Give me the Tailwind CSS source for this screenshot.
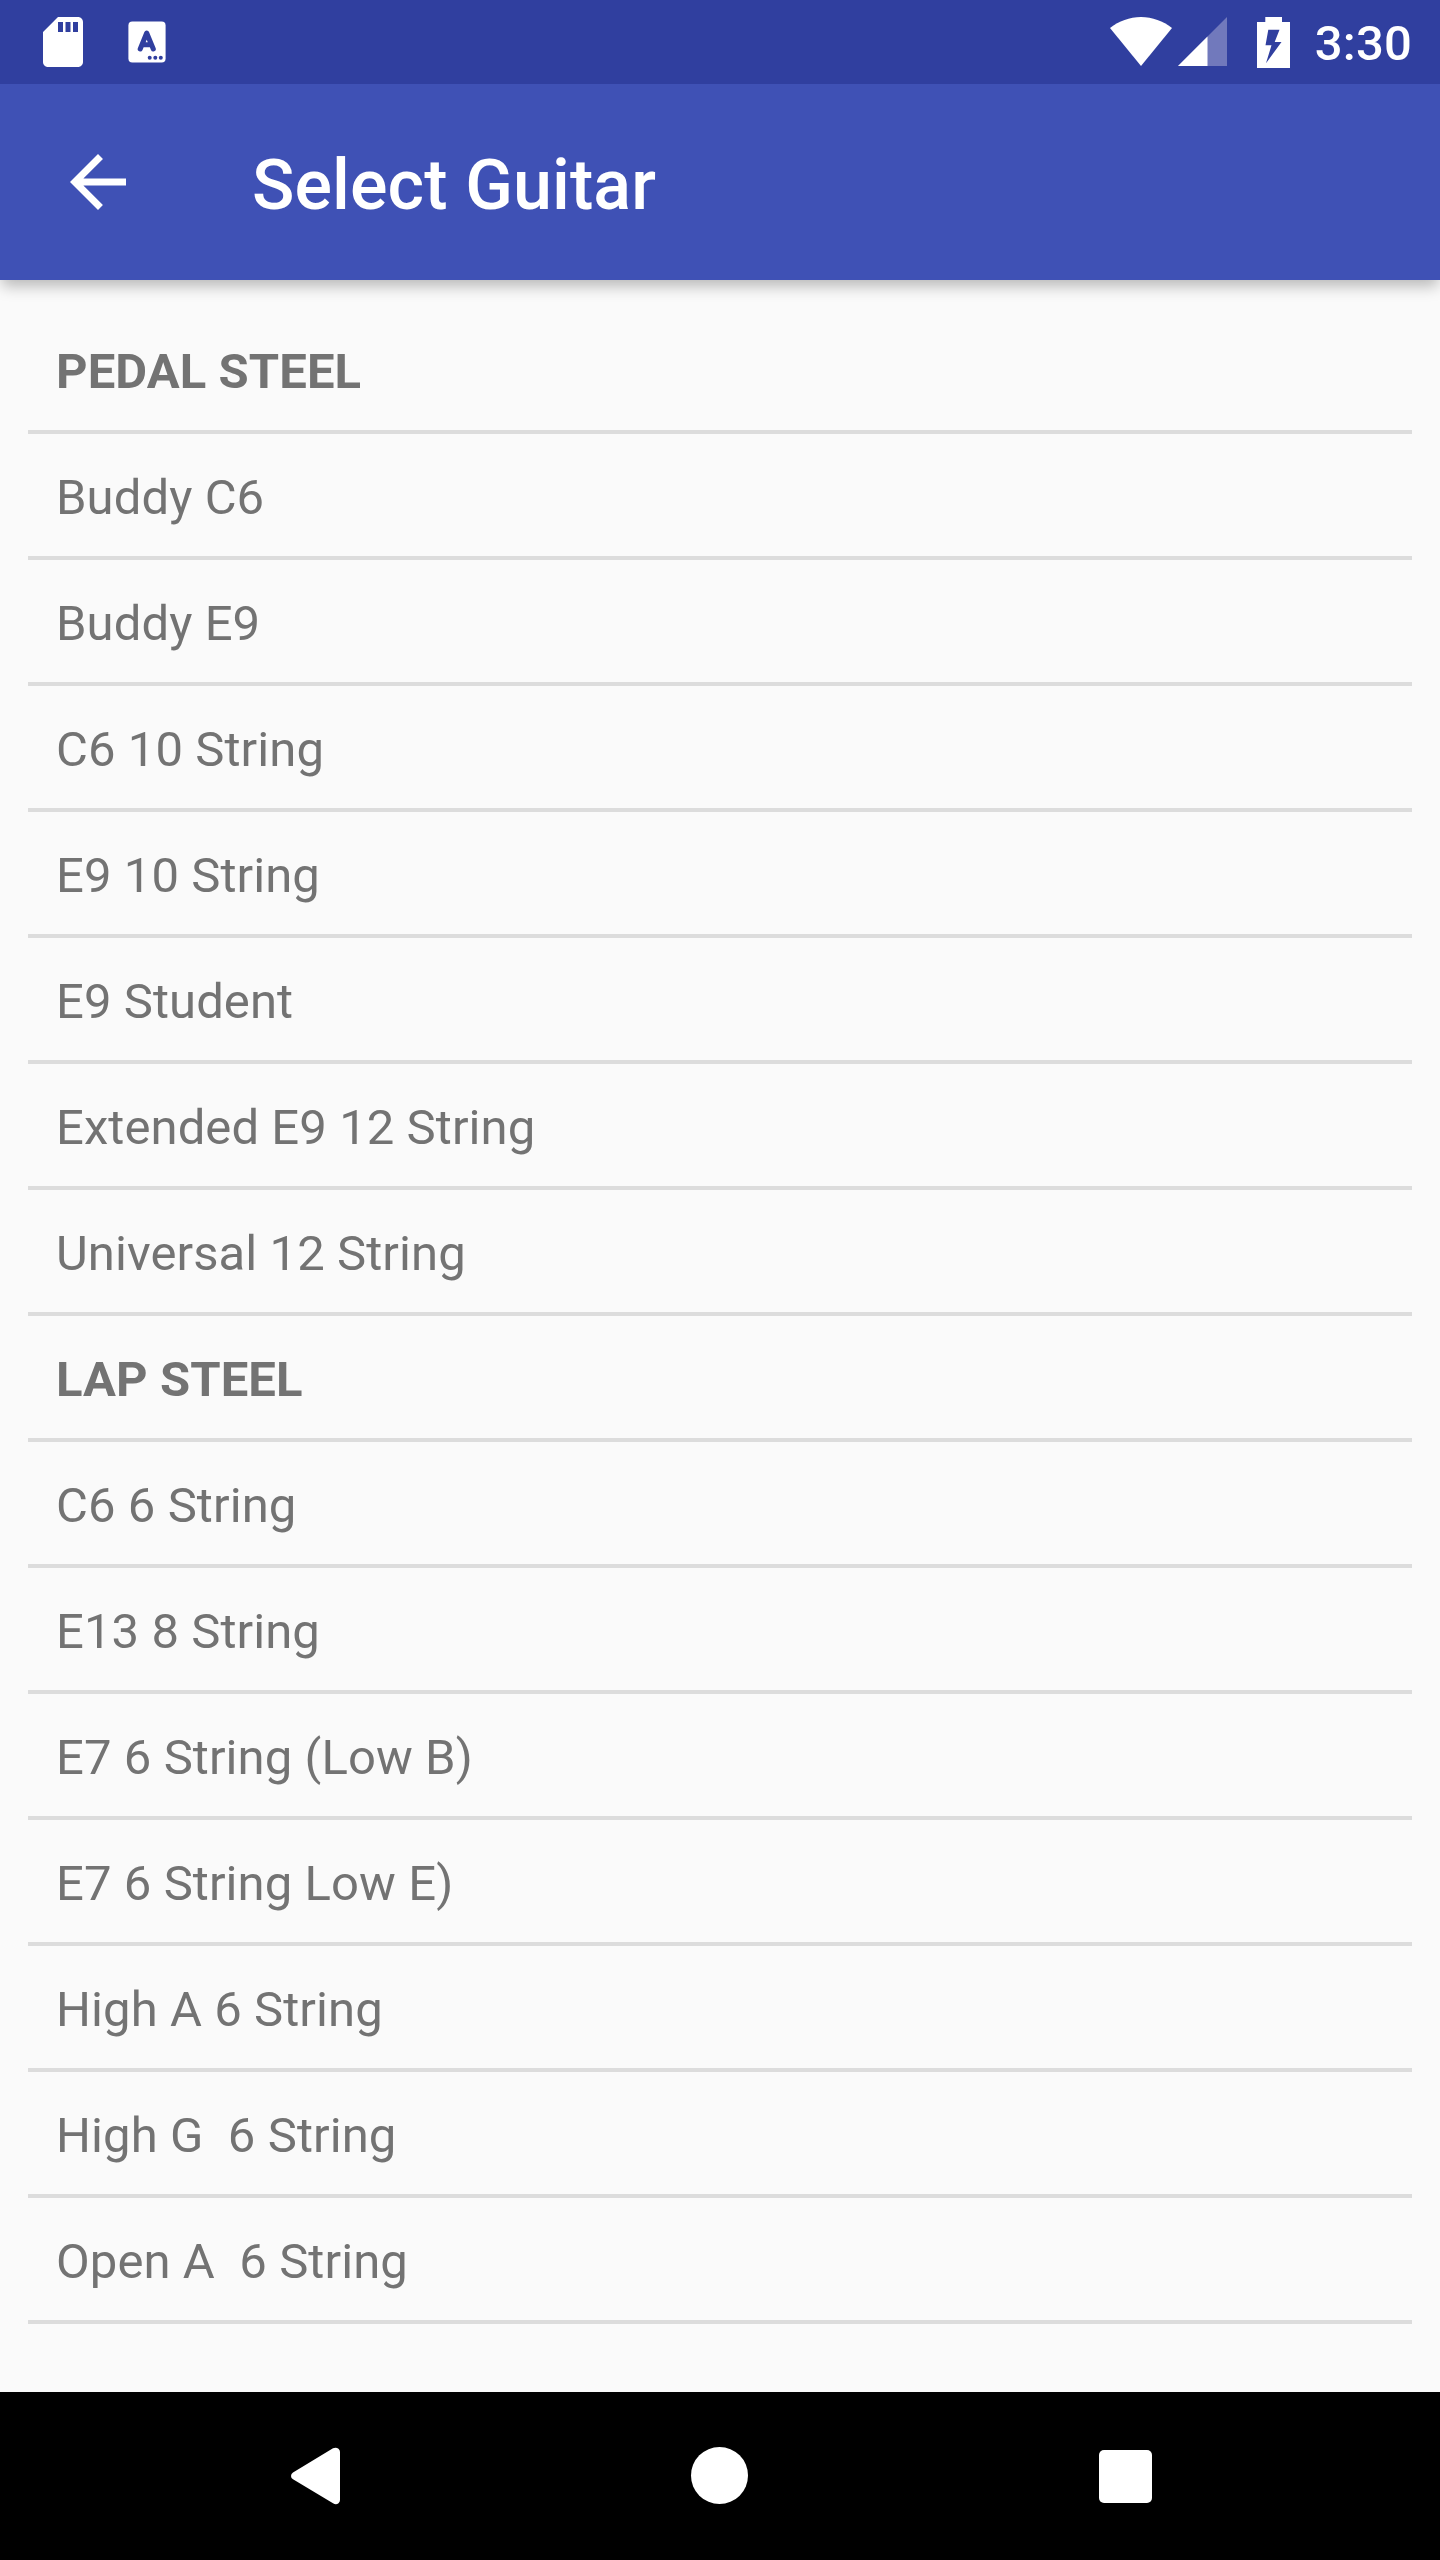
<!DOCTYPE html>
<html lang="en">
<head>
<meta charset="utf-8">
<title>Select Guitar</title>
<script src="https://cdn.jsdelivr.net/npm/@tailwindcss/browser@4"></script>
</head>
<body class="bg-[#fafafa]">
<div class="flex h-[2560px] w-[1440px] flex-col overflow-hidden bg-[#fafafa] font-[Roboto,sans-serif]">
  <div class="z-10 shrink-0 shadow-[0_8px_14px_-2px_rgba(0,0,0,0.27)]">
    <div class="flex h-[84px] items-center bg-[#303f9f] text-white">
      <svg class="ml-[33px] size-[60px] shrink-0" viewBox="0 0 24 24" fill="currentColor"><path d="M18 2h-8L4 8v12c0 1.100.9 2 2 2h12c1.100 0 2-.9 2-2V4c0-1.100-.9-2-2-2zm-6 6h-2V4h2v4zm3 0h-2V4h2v4zm3 0h-2V4h2v4z"/></svg>
      <svg class="ml-[35px] h-[42px] w-[38px] shrink-0" viewBox="0 0 38 42">
        <rect x=".4" y=".4" width="37.200" height="41.200" rx="4" fill="#fff"/>
        <path d="M12.200 28 18.700 12 25.300 28M14.500 23.800h8.500" fill="none" stroke="#303f9f" stroke-width="5" stroke-linecap="round" stroke-linejoin="round"/>
        <g fill="#303f9f"><circle cx="21.700" cy="36.700" r="2"/><circle cx="27.300" cy="36.700" r="2"/><circle cx="32.800" cy="36.700" r="2"/></g>
      </svg>
      <div class="grow"></div>
      <svg class="h-[50px] w-[62px] shrink-0" viewBox="0 0 62 50" fill="currentColor"><path d="M31 49 0 11C9 4 19.500 0 31 0S53 4 62 11Z"/></svg>
      <svg class="ml-[6px] h-[50px] w-[49px] shrink-0" viewBox="0 0 49 50"><path d="M0 49 49 0v49Z" fill="#7179bc"/><path d="M0 49 29.500 19.500v29.500Z" fill="#fff"/></svg>
      <svg class="ml-[30px] h-[51px] w-[33px] shrink-0" viewBox="0 0 33 51" fill="currentColor"><path fill-rule="evenodd" d="M8.300 0h16.700v5h8v46H0V5h8.300ZM11.300 12.700 8.500 28.300h6L9 46.300 24.500 25H17.700L22.500 12.700Z"/></svg>
      <div class="mr-[28px] ml-[25px] pt-[4px] text-[49px] leading-[58px] font-medium tracking-[0.2px]">3:30</div>
    </div>
    <div class="flex h-[196px] items-center bg-[#3f51b5] text-white">
      <svg class="ml-[56px] size-[84px] shrink-0" viewBox="0 0 24 24" fill="currentColor"><path d="M20 11H7.830l5.590-5.590L12 4l-8 8 8 8 1.410-1.410L7.830 13H20v-2z"/></svg>
      <h1 class="ml-[112px] pt-[6px] text-[70px] leading-[82px] font-medium tracking-[0.1px]">Select Guitar</h1>
    </div>
  </div>
  <ul class="mx-7 mt-7 grow text-[49px] leading-[58px] tracking-[0.08px] text-[#737373] *:flex *:h-[126px] *:items-center *:border-b-4 *:border-[#dcdcdc] *:px-7 *:pt-[6px] *:whitespace-pre">
    <li class="font-bold">PEDAL STEEL</li>
    <li>Buddy C6</li>
    <li>Buddy E9</li>
    <li>C6 10 String</li>
    <li>E9 10 String</li>
    <li>E9 Student</li>
    <li>Extended E9 12 String</li>
    <li>Universal 12 String</li>
    <li class="font-bold">LAP STEEL</li>
    <li>C6 6 String</li>
    <li>E13 8 String</li>
    <li>E7 6 String (Low B)</li>
    <li>E7 6 String Low E)</li>
    <li>High A 6 String</li>
    <li>High G  6 String</li>
    <li>Open A  6 String</li>
  </ul>
  <nav class="flex h-[168px] shrink-0 items-center bg-black text-white">
    <svg class="ml-[291px] h-[58px] w-[49px]" viewBox="0 0 49 58" fill="currentColor"><path d="M2 25.500 42 1.300Q45-.2 47.500 1.800 49 3 49 5V53Q49 55 47.500 56.200 45 58.200 42 56.200L2 32.300Q0 31 0 28.900T2 25.500Z"/></svg>
    <div class="mb-[1px] ml-[351px] size-[57px] rounded-full bg-white"></div>
    <div class="mt-[1px] ml-[351px] size-[53px] rounded-[5px] bg-white"></div>
  </nav>
</div>
</body>
</html>
